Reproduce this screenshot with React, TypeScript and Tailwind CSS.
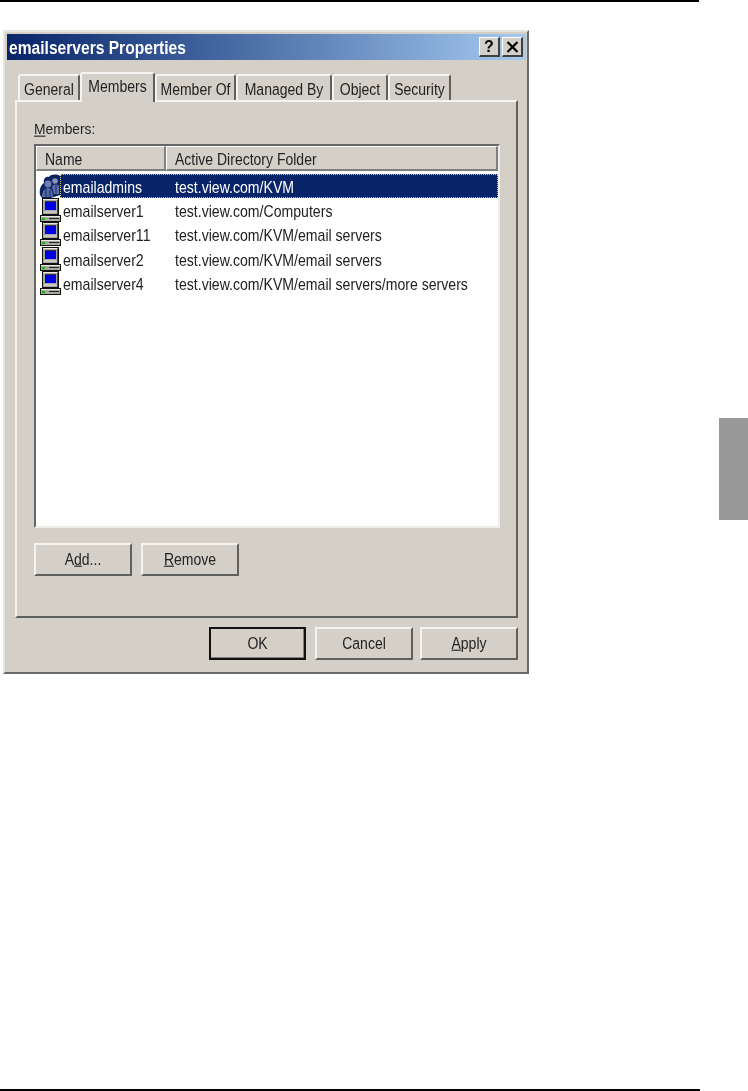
const rows = [
  ["emailserver1", "test.view.com/Computers"],
  ["emailserver11", "test.view.com/KVM/email servers"],
  ["emailserver2", "test.view.com/KVM/email servers"],
  ["emailserver4", "test.view.com/KVM/email servers/more servers"],
];

function T({ children }: { children: React.ReactNode }) {
  return <span className="inline-block scale-y-[1.12] whitespace-pre">{children}</span>;
}

function Computer() {
  return (
    <svg width="24" height="24" viewBox="0 0 24 24" className="shrink-0" shapeRendering="crispEdges">
      <rect x="3" y="0" width="17" height="17" fill="#111" />
      <rect x="4" y="1" width="15" height="15" fill="#a8a8a0" />
      <rect x="4" y="1" width="14" height="1" fill="#e8e8e2" />
      <rect x="6" y="3" width="11" height="1" fill="#333" />
      <rect x="6" y="4" width="11" height="8" fill="#0000e8" />
      <rect x="5" y="13" width="13" height="2" fill="#c8c8c0" />
      <rect x="18" y="2" width="1" height="14" fill="#444" />
      <rect x="1" y="17" width="21" height="7" fill="#111" />
      <rect x="2" y="18" width="19" height="5" fill="#a8a8a0" />
      <rect x="2" y="18" width="19" height="1" fill="#e8e8e2" />
      <rect x="3" y="20" width="3" height="2" fill="#12b012" />
      <rect x="10" y="20" width="10" height="1" fill="#222" />
    </svg>
  );
}

function Group() {
  return (
    <svg width="21" height="24" viewBox="0 0 21 24" className="shrink-0">
      <path d="M1 21 C0 15 2 11 5 9 C4 5 7 2 10 3 C12 0 18 0 21 2 L21 21 L12 24 L3 24 Z" fill="#0d2360" />
      <circle cx="9" cy="10" r="3.4" fill="#6f7fb4" />
      <path d="M3 23 C3 17 6 14 9 14 C12 14 14 17 14 23 Z" fill="#5568a3" />
      <circle cx="16" cy="7" r="2.8" fill="#8593bf" />
      <path d="M13 13 C14 10 18 10 20 12 L20 20 L15 20 Z" fill="#5f70a8" />
      <path d="M7 15 L7 23 M11 16 L11 23 M17 11 L17 19" stroke="#1b2f6e" strokeWidth="1" fill="none" />
    </svg>
  );
}

function Raised({ w, children, dark }: { w: string; children: React.ReactNode; dark?: boolean }) {
  return (
    <div className={`${w} h-[33px] shrink-0 ${dark ? "border-2 border-[#111] shadow-[inset_-1px_-1px_0_#808080]" : "border-t-2 border-l-2 border-t-[#f4f3ef] border-l-[#f4f3ef] border-r-2 border-b-2 border-r-[#5f5f5b] border-b-[#5f5f5b]"} flex items-center justify-center text-[14px] text-[#222]`}>
      <T>{children}</T>
    </div>
  );
}

function Tab({ label, w, active }: { label: string; w: string; active?: boolean }) {
  return (
    <div
      className={`${w} shrink-0 flex justify-center border-t-2 border-l-2 border-r-2 border-t-[#f4f3ef] border-l-[#f4f3ef] border-r-[#5f5f5b] rounded-t-[3px] text-[14px] text-[#222] ${
        active ? "h-[30px] pt-[3px] -mb-[2px] bg-[#d4d0c8] relative z-10" : "h-[26px] mt-[2px] pt-[3px]"
      }`}
    >
      <T>{label}</T>
    </div>
  );
}

const capButton = "w-[21px] h-[20px] bg-[#d4d0c8] border-t border-l border-t-white border-l-white border-r-2 border-b-2 border-r-[#404040] border-b-[#404040] flex items-center justify-center";

export default function App() {
  return (
    <div className="w-[748px] h-[1091px] bg-white flex flex-col overflow-hidden font-['Liberation_Sans',sans-serif]">
      <div className="w-[699px] h-[2px] bg-black shrink-0" />
      <div className="flex flex-1 min-h-0">
        <div className="ml-[3px] mt-[28px] w-[526px] h-[644px] shrink-0 bg-[#d4d0c8] border-t-[2px] border-l-[2px] border-t-[#e6e4de] border-l-[#e6e4de] border-r-[2px] border-b-[2px] border-r-[#6a6a66] border-b-[#6a6a66] pt-[2px] pl-[2px] pr-px flex flex-col blur-[0.35px]">
          <div className="h-[26px] shrink-0 bg-gradient-to-r from-[#0a246a] to-[#a6caf0] flex items-center pl-[2px] pr-[3px]">
            <span className="inline-block text-[15.6px] font-bold text-white leading-none scale-y-[1.12] pt-px">emailservers Properties</span>
            <div className="ml-auto flex gap-[2px]">
              <div className={`${capButton} text-[16px] font-bold text-black leading-none`}>?</div>
              <div className={capButton}>
                <svg width="13" height="12" viewBox="0 0 13 12"><path d="M1.5 1 L11.5 11 M11.5 1 L1.5 11" stroke="#000" strokeWidth="2.2" /></svg>
              </div>
            </div>
          </div>

          <div className="flex pl-[11px] mt-[11px] h-[29px] shrink-0 items-end">
            <Tab label="General" w="w-[62px]" />
            <Tab label="Members" w="w-[75px]" active />
            <Tab label="Member Of" w="w-[81px]" />
            <Tab label="Managed By" w="w-[96px]" />
            <Tab label="Object" w="w-[56px]" />
            <Tab label="Security" w="w-[63px]" />
          </div>

          <div className="ml-[8px] w-[503px] h-[518px] shrink-0 border-t-2 border-l-2 border-t-[#f4f3ef] border-l-[#f4f3ef] border-r-2 border-b-2 border-r-[#5f5f5b] border-b-[#5f5f5b] pl-[17px] pt-[20px] flex flex-col">
            <div className="text-[13.8px] leading-[16px] text-[#222]"><T><span className="underline">M</span>embers:</T></div>
            <div className="mt-[6px] w-[466px] h-[384px] shrink-0 bg-white border-t-2 border-l-2 border-t-[#666] border-l-[#666] border-r-2 border-b-2 border-r-[#eeede8] border-b-[#eeede8] flex flex-col">
              <div className="flex h-[25px] shrink-0 text-[14px] text-[#222]">
                <div className="w-[130px] bg-[#d4d0c8] border-t border-l border-t-white border-l-white border-r-2 border-b-2 border-r-[#808080] border-b-[#808080] pl-[8px] pt-[2px]"><T>Name</T></div>
                <div className="flex-1 bg-[#d4d0c8] border-t border-l border-t-white border-l-white border-r-2 border-b-2 border-r-[#808080] border-b-[#808080] pl-[8px] pt-[2px]"><T>Active Directory Folder</T></div>
              </div>
              <div className="mt-[3px] h-[24px] flex items-center text-[14.1px]">
                <div className="ml-[3px]"><Group /></div>
                <div className="flex-1 h-[24px] bg-[#0a246a] text-white flex items-center pl-[2px] pt-[3px] border border-dotted border-[#d8c860]">
                  <span className="w-[112px]"><T>emailadmins</T></span>
                  <T>test.view.com/KVM</T>
                </div>
              </div>
              {rows.map(([n, p]) => (
                <div key={n} className="h-[24.25px] flex items-center text-[14.1px] text-[#222]">
                  <div className="ml-[3px]"><Computer /></div>
                  <span className="w-[112px] pt-[3px]"><T>{n}</T></span>
                  <span className="pt-[3px]"><T>{p}</T></span>
                </div>
              ))}
            </div>
            <div className="mt-[15px] flex gap-[9px]">
              <Raised w="w-[98px]">A<span className="underline">d</span>d...</Raised>
              <Raised w="w-[98px]"><span className="underline">R</span>emove</Raised>
            </div>
          </div>

          <div className="mt-[9px] flex pl-[202px]">
            <Raised w="w-[97px]" dark>OK</Raised>
            <div className="ml-[9px]"><Raised w="w-[98px]">Cancel</Raised></div>
            <div className="ml-[7px]"><Raised w="w-[98px]"><span className="underline">A</span>pply</Raised></div>
          </div>
        </div>
        <div className="ml-auto mt-[416px] w-[29px] h-[102px] bg-[#999999]" />
      </div>
      <div className="w-[700px] h-[2px] bg-black shrink-0" />
    </div>
  );
}
